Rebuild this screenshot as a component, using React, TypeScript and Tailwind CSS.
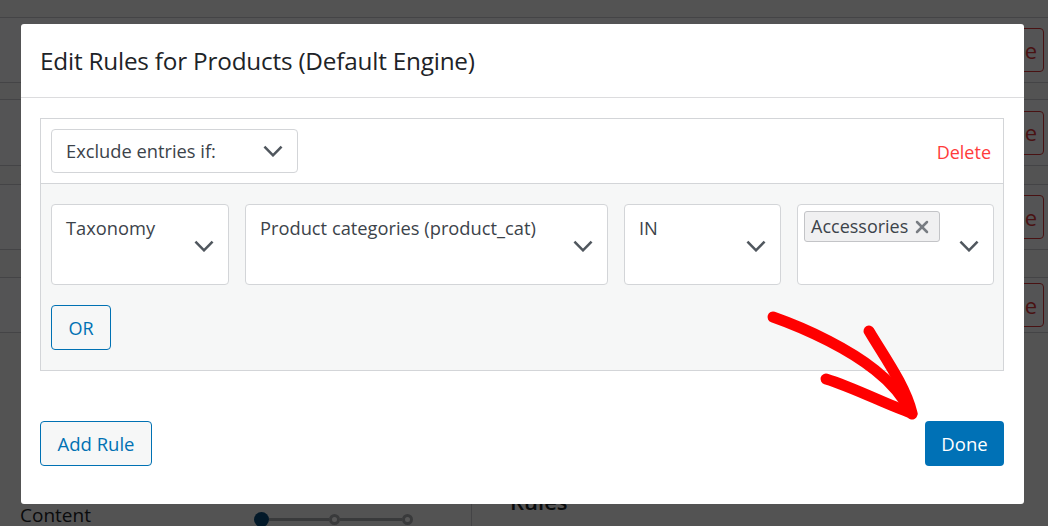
import { X } from "lucide-react";

const font = { fontFamily: '"Open Sans", "Noto Sans", sans-serif' };

function Chevron({ className = "" }: { className?: string }) {
  return (
    <svg
      viewBox="0 0 24 14"
      className={`h-[12px] w-[22px] shrink-0 ${className}`}
      fill="none"
      stroke="#50575e"
      strokeWidth={3}
    >
      <path d="M2 2l10 10 10-10" />
    </svg>
  );
}

function Select({
  width,
  children,
}: {
  width: string;
  children: React.ReactNode;
}) {
  return (
    <div
      className={`${width} flex h-[81px] shrink-0 items-start justify-between rounded-[4px] border border-[#d3d5d8] bg-white pl-[14px] pr-[13px] pt-[10px]`}
    >
      <div className="text-[18.3px] leading-[26px] text-[#3c434a]">{children}</div>
      <Chevron className="mt-[25px]" />
    </div>
  );
}

function BackgroundPage() {
  const rows = [
    { top: "h-[18px]", body: "h-[65px]" },
    { top: "h-[17px]", body: "h-[66px]" },
    { top: "h-[19px]", body: "h-[65px]" },
    { top: "h-[28px]", body: "h-[55px]" },
  ];
  return (
    <div className="flex h-full w-full flex-col bg-[#f3f3f4]">
      {rows.map((r, i) => (
        <div key={i} className="flex flex-col">
          <div className={`${r.top} border-b border-[#c8c8cc]`} />
          <div className={`${r.body} flex items-center justify-end border-b border-[#c8c8cc] bg-[#f7f7f8] pr-[4px]`}>
            <div className="flex h-[44px] w-[24px] items-center justify-end overflow-hidden rounded-[4px] border border-[#d63638] pr-[6px] text-[22px] text-[#d63638]">
              e
            </div>
          </div>
        </div>
      ))}
      <div className="flex flex-1 items-end">
        <div className="flex h-[46px] w-[472px] items-end border-r border-[#c8c8cc] pl-[20px]">
          <span className="text-[19px] leading-[22px] text-[#1d2327]">Content</span>
        </div>
        <div className="pb-[8px] pl-[38px] text-[22px] font-semibold text-[#1d2327]">Rules</div>
      </div>
    </div>
  );
}

export default function App() {
  return (
    <div className="relative h-[526px] w-[1048px] overflow-hidden" style={font}>
      <BackgroundPage />
      <div className="absolute left-[254px] top-[512px] flex items-center">
        <span className="h-[15px] w-[15px] rounded-full bg-[#0a4b78]" />
        <span className="h-[3px] w-[60px] bg-[#a7aaad]" />
        <span className="h-[11px] w-[11px] rounded-full border-[3px] border-[#a7aaad] bg-white" />
        <span className="h-[3px] w-[62px] bg-[#a7aaad]" />
        <span className="h-[11px] w-[11px] rounded-full border-[3px] border-[#a7aaad] bg-white" />
      </div>
      <div className="absolute inset-0 bg-black/[0.66]" />

      <div className="absolute left-[21px] top-[24px] flex h-[480px] w-[1003px] flex-col rounded-[3px] bg-white">
        <div className="flex h-[74px] shrink-0 items-center border-b border-[#dcdcde] px-[19px] pt-[2px]">
          <h1 className="text-[24.3px] tracking-[-0.2px] text-[#1d2327]">Edit Rules for Products (Default Engine)</h1>
        </div>

        <div className="px-[19px] pr-[20px] pt-[20px]">
          <div className="border border-[#d3d5d8]">
            <div className="flex items-center justify-between border-b border-[#d3d5d8] bg-white p-[10px] pr-[12px]">
              <div className="flex h-[44px] w-[247px] items-center justify-between rounded-[4px] border border-[#d3d5d8] pl-[14px] pr-[13px]">
                <span className="text-[18.3px] text-[#3c434a]">Exclude entries if:</span>
                <Chevron />
              </div>
              <span className="pt-[2px] text-[18px] text-[#ff3b3b]">Delete</span>
            </div>
            <div className="flex flex-col items-start gap-[20px] bg-[#f6f7f7] px-[10px] pb-[20px] pt-[20px]">
              <div className="flex gap-[16px]">
                <Select width="w-[178px]">Taxonomy</Select>
                <Select width="w-[363px]">Product categories (product_cat)</Select>
                <Select width="w-[157px]">IN</Select>
                <div className="flex h-[81px] w-[197px] shrink-0 items-start justify-between rounded-[4px] border border-[#d3d5d8] bg-white pl-[6px] pr-[13px] pt-[6px]">
                  <span className="flex h-[31px] items-center gap-[4px] rounded-[3px] border border-[#c3c4c7] bg-[#f0f0f1] pl-[6px] pr-[7px] text-[18px] text-[#3c434a]">
                    Accessories
                    <X className="h-[20px] w-[20px] text-[#787c82]" strokeWidth={3} />
                  </span>
                  <Chevron className="mt-[29px]" />
                </div>
              </div>
              <button className="flex h-[45px] w-[60px] items-center justify-center rounded-[4px] border border-[#0071b3] bg-[#f6f7f7] pt-[1px] text-[18px] text-[#0071b3]">
                OR
              </button>
            </div>
          </div>
        </div>

        <div className="mt-auto flex items-center justify-between px-[19px] pb-[38px] pr-[20px]">
          <button className="flex h-[45px] w-[112px] items-center justify-center rounded-[4px] border border-[#0071b3] bg-[#f6f7f7] text-[18.5px] text-[#0071b3]">
            Add Rule
          </button>
          <button className="flex h-[45px] w-[79px] items-center justify-center rounded-[4px] bg-[#0071b6] text-[18.5px] text-white">
            Done
          </button>
        </div>
      </div>

      <svg
        className="pointer-events-none absolute left-0 top-0"
        width={1048}
        height={526}
        fill="none"
        stroke="#ff0000"
        strokeWidth={11}
        strokeLinecap="round"
        strokeLinejoin="round"
      >
        <path d="M773 317 C810 330 850 350 875 370 C893 384 905 400 912 414" />
        <path d="M869 331 C885 358 905 385 912 413" />
        <path d="M826 379 C855 388 885 404 911 413" />
      </svg>
    </div>
  );
}
